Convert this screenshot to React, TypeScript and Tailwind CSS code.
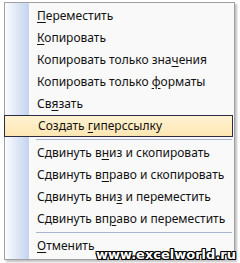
type Item = { before: string; key: string; after: string } | 'sep';

const ITEMS: Item[] = [
  { before: '', key: 'П', after: 'ереместить' },
  { before: '', key: 'К', after: 'опировать' },
  { before: 'Копировать только зна', key: 'ч', after: 'ения' },
  { before: 'Копировать только ', key: 'ф', after: 'орматы' },
  { before: 'Св', key: 'я', after: 'зать' },
  { before: 'Создать ', key: 'г', after: 'иперссылку' },
  'sep',
  { before: 'Сдвинуть в', key: 'н', after: 'из и скопировать' },
  { before: 'Сдвинуть в', key: 'п', after: 'раво и скопировать' },
  { before: 'Сдвинуть вни', key: 'з', after: ' и переместить' },
  { before: 'Сдвинуть вп', key: 'р', after: 'аво и переместить' },
  'sep',
  { before: '', key: 'О', after: 'тменить' },
];

const ACTIVE = 5;

export default function App() {
  return (
    <div className="relative w-[240px] h-[263px] bg-white overflow-hidden" style={{ fontFamily: '"Noto Sans", "DejaVu Sans", sans-serif' }}>
      <div className="ml-[4px] mt-[2px] w-[231px] border border-[#a0a0a0] bg-[#f9f9f9] shadow-[2px_2px_2px_rgba(0,0,0,0.25)] relative py-[2px]">
        <div className="absolute left-0 top-0 bottom-0 w-[24px] bg-gradient-to-r from-[#fbfcfe] to-[#c4d3ef]" />
        {ITEMS.map((it, i) =>
          it === 'sep' ? (
            <div key={i} className="relative h-[5px] flex items-center pl-[31px] pr-[2px]">
              <div className="w-full h-[1px] bg-[#a9b4cf]" />
            </div>
          ) : (
            <div
              key={i}
              className={`relative h-[22px] flex items-center pl-[32px] text-[12px] text-[#111] ${
                i === ACTIVE ? '-ml-[1px] mr-[1px] border border-[#2b2b45] bg-gradient-to-b from-[#fff3d2] to-[#fde6b2] pl-[33px]' : ''
              }`}
            >
              <span>
                {it.before}
                <span className="underline underline-offset-2">{it.key}</span>
                {it.after}
              </span>
            </div>
          )
        )}
      </div>
      <div
        className="absolute right-[4px] bottom-[1px] text-[13px] leading-[15px] font-bold text-white"
        style={{
          fontFamily: '"DejaVu Sans", sans-serif',
          textShadow: '1px 0 #000, -1px 0 #000, 0 1px #000, 0 -1px #000, 1px 1px #000, -1px -1px #000, 1px -1px #000, -1px 1px #000',
        }}
      >
        www.excelworld.ru
      </div>
    </div>
  );
}
